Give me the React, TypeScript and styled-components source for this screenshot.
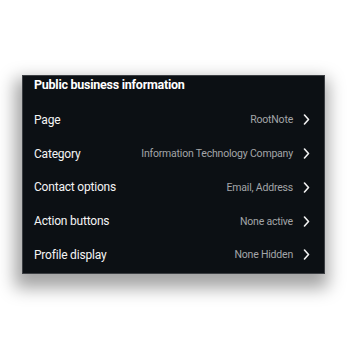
import React from 'react'
import styled, { createGlobalStyle } from 'styled-components'

const GlobalStyle = createGlobalStyle`
  html, body {
    margin: 0;
    padding: 0;
    background: #ffffff;
  }
  body {
    font-family: Roboto, 'Noto Sans', 'Liberation Sans', sans-serif;
    -webkit-font-smoothing: antialiased;
  }
`

const rows = [
  { label: 'Page', value: 'RootNote' },
  { label: 'Category', value: 'Information Technology Company' },
  { label: 'Contact options', value: 'Email, Address' },
  { label: 'Action buttons', value: 'None active' },
  { label: 'Profile display', value: 'None Hidden' },
]

const Chevron = () => (
  <svg width="7" height="11" viewBox="0 0 7 11" fill="none">
    <polyline
      points="1.5,1 5.5,5.5 1.5,10"
      stroke="#f2f2f2"
      strokeWidth="1.6"
      strokeLinecap="round"
      strokeLinejoin="round"
    />
  </svg>
)

const App: React.FC = () => {
  return (
    <>
      <GlobalStyle />
      <Page>
        <Card>
          <Title>Public business information</Title>
          {rows.map((r) => (
            <Row key={r.label}>
              <Label>{r.label}</Label>
              <Value>{r.value}</Value>
              <Chevron />
            </Row>
          ))}
        </Card>
      </Page>
    </>
  )
}

export default App

//* Styled components *//

const Page = styled.div`
  padding: 75px 22px 0 22px;
  width: 347px;
  height: 347px;
  box-sizing: border-box;
`

const Card = styled.div`
  width: 303px;
  box-sizing: border-box;
  background: #0c1014;
  border: 1px solid #3c3f43;
  box-shadow: -2px 9px 16px 5px rgba(0, 0, 0, 0.36);
  padding: 0 14px 1px 11px;
  display: flex;
  flex-direction: column;
`

const Title = styled.div`
  height: 26px;
  padding-top: 1px;
  line-height: 16px;
  font-size: 12.5px;
  font-weight: 700;
  letter-spacing: -0.25px;
  color: #ffffff;
`

const Row = styled.div`
  height: 33.75px;
  display: flex;
  align-items: center;
  gap: 10px;
`

const Label = styled.span`
  flex: 1;
  font-size: 12px;
  letter-spacing: -0.2px;
  color: #f4f4f4;
`

const Value = styled.span`
  font-size: 10.5px;
  letter-spacing: -0.2px;
  color: #a3a5a8;
`
